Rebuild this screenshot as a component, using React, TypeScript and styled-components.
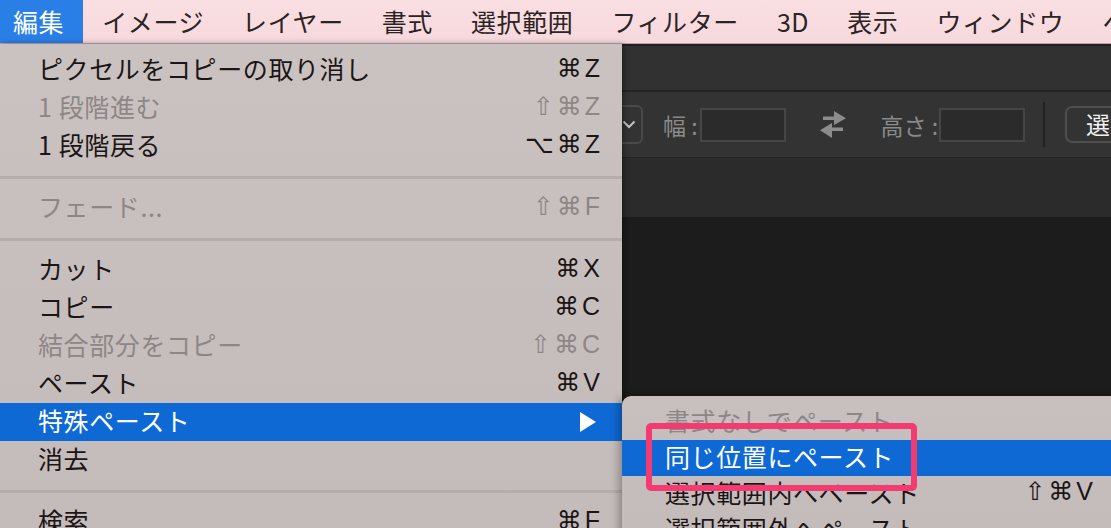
import React from 'react';
import styled, { createGlobalStyle } from 'styled-components';

type Entry =
  | { kind: 'item'; label: string; shortcut?: string; disabled?: boolean; active?: boolean; submenu?: boolean }
  | { kind: 'sep' };

const editMenu: Entry[] = [
  { kind: 'item', label: 'ピクセルをコピーの取り消し', shortcut: '⌘Z' },
  { kind: 'item', label: '1 段階進む', shortcut: '⇧⌘Z', disabled: true },
  { kind: 'item', label: '1 段階戻る', shortcut: '⌥⌘Z' },
  { kind: 'sep' },
  { kind: 'item', label: 'フェード...', shortcut: '⇧⌘F', disabled: true },
  { kind: 'sep' },
  { kind: 'item', label: 'カット', shortcut: '⌘X' },
  { kind: 'item', label: 'コピー', shortcut: '⌘C' },
  { kind: 'item', label: '結合部分をコピー', shortcut: '⇧⌘C', disabled: true },
  { kind: 'item', label: 'ペースト', shortcut: '⌘V' },
  { kind: 'item', label: '特殊ペースト', active: true, submenu: true },
  { kind: 'item', label: '消去' },
  { kind: 'sep' },
  { kind: 'item', label: '検索', shortcut: '⌘F' },
];

const pasteMenu = [
  { label: '書式なしでペースト', disabled: true },
  { label: '同じ位置にペースト', active: true },
  { label: '選択範囲内へペースト', shortcut: '⇧⌘V' },
  { label: '選択範囲外へペースト' },
];

const menuTitles = ['編集', 'イメージ', 'レイヤー', '書式', '選択範囲', 'フィルター', '3D', '表示', 'ウィンドウ', 'ヘルプ'];

export default function App() {
  return (
    <>
      <GlobalStyle />
      <Screen>
        <MenuBar>
          {menuTitles.map((t, i) => (
            <MenuTitle key={t} $active={i === 0}>
              {t}
            </MenuTitle>
          ))}
        </MenuBar>

        <Workspace>
          <TabStrip />
          <OptionsBar>
            <Dropdown>
              <svg width="14" height="9" viewBox="0 0 14 9">
                <path d="M1.5 1.5 L7 7 L12.5 1.5" fill="none" stroke="#c4c4c4" strokeWidth="2" />
              </svg>
            </Dropdown>
            <FieldLabel $ml={20}>幅 :</FieldLabel>
            <FieldBox $ml={2} />
            <SwapIcon width="28" height="27" viewBox="0 0 28 27">
              <rect x="4" y="5.5" width="13" height="3.5" fill="#8c8c8c" />
              <polygon points="15,0 27,7.2 15,14" fill="#8c8c8c" />
              <rect x="11" y="16.5" width="13" height="3.5" fill="#8c8c8c" />
              <polygon points="13,12 1,19.2 13,27" fill="#8c8c8c" />
            </SwapIcon>
            <FieldLabel $ml={34}>高さ :</FieldLabel>
            <FieldBox $ml={1} />
            <Divider />
            <ToolButton>選択とマスク...</ToolButton>
          </OptionsBar>
          <DocBar />
          <Canvas />
        </Workspace>

        <EditMenu>
          {editMenu.map((e, i) =>
            e.kind === 'sep' ? (
              <Separator key={i} />
            ) : (
              <Row key={i} $disabled={e.disabled} $active={e.active}>
                <span>{e.label}</span>
                {e.shortcut && <Shortcut>{e.shortcut}</Shortcut>}
                {e.submenu && (
                  <svg width="18" height="22" viewBox="0 0 18 22">
                    <polygon points="1,1 17,11 1,21" fill="#fff" />
                  </svg>
                )}
              </Row>
            )
          )}
        </EditMenu>

        <SubMenu>
          {pasteMenu.map((e) => (
            <SubRow key={e.label} $disabled={e.disabled} $active={e.active}>
              <span>{e.label}</span>
              {e.shortcut && <Shortcut>{e.shortcut}</Shortcut>}
            </SubRow>
          ))}
        </SubMenu>

        <Callout />
      </Screen>
    </>
  );
}

const GlobalStyle = createGlobalStyle`
  html, body {
    margin: 0;
    padding: 0;
    background: #1c1c1c;
    overflow: hidden;
  }
  body {
    font-family: 'Noto Sans CJK JP', 'Noto Sans', sans-serif;
  }
`;

const Screen = styled.div`
  position: relative;
  width: 1111px;
  height: 528px;
  overflow: hidden;
  display: flex;
  flex-direction: column;
  background: #1c1c1c;
`;

const MenuBar = styled.div`
  height: 43px;
  flex-shrink: 0;
  display: flex;
  align-items: stretch;
  background: linear-gradient(#fadfe2, #f6d9dc);
  border-bottom: 1px solid #b9a6a9;
  white-space: nowrap;
`;

const MenuTitle = styled.div<{ $active?: boolean }>`
  display: flex;
  align-items: center;
  padding: 0 19px 2px;
  font-size: 25px;
  letter-spacing: 0.6px;
  color: ${({ $active }) => ($active ? '#ffffff' : '#2b2324')};
  background: ${({ $active }) => ($active ? '#2a7fe7' : 'transparent')};

  &:first-child {
    padding-left: 13px;
  }
`;

const Workspace = styled.div`
  flex: 1;
  display: flex;
  flex-direction: column;
  border-top: 2px solid #1f1f1f;
`;

const TabStrip = styled.div`
  height: 44px;
  flex-shrink: 0;
  background: #313131;
  border-bottom: 2px solid #232323;
`;

const OptionsBar = styled.div`
  height: 65px;
  flex-shrink: 0;
  display: flex;
  align-items: center;
  padding-left: 563px;
  background: #333333;
  border-bottom: 1px solid #242424;
  white-space: nowrap;
  overflow: hidden;

  & > * {
    flex-shrink: 0;
  }
`;

const Dropdown = styled.div`
  width: 80px;
  height: 39px;
  box-sizing: border-box;
  display: flex;
  align-items: center;
  justify-content: flex-end;
  padding-right: 5px;
  border: 2px solid #4a4a4a;
  border-radius: 6px;
`;

const FieldLabel = styled.span<{ $ml: number }>`
  margin-left: ${({ $ml }) => $ml}px;
  font-size: 23px;
  color: #8a8a8a;
`;

const FieldBox = styled.div<{ $ml: number }>`
  margin-left: ${({ $ml }) => $ml}px;
  width: 86px;
  height: 34px;
  box-sizing: border-box;
  border: 2px solid #464646;
  background: #2b2b2b;
`;

const SwapIcon = styled.svg`
  margin-left: 33px;
`;

const Divider = styled.div`
  margin-left: 18px;
  width: 2px;
  height: 45px;
  background: #222222;
`;

const ToolButton = styled.div`
  margin-left: 20px;
  height: 37px;
  box-sizing: border-box;
  display: flex;
  align-items: center;
  padding: 0 19px 2px;
  border: 2px solid #4e4e4e;
  border-radius: 7px;
  font-size: 24px;
  color: #f0f0f0;
`;

const DocBar = styled.div`
  height: 59px;
  flex-shrink: 0;
  background: #2b2b2b;
`;

const Canvas = styled.div`
  flex: 1;
  background: #1c1c1c;
`;

const EditMenu = styled.div`
  position: absolute;
  top: 44px;
  left: 0;
  width: 622px;
  bottom: -40px;
  padding-top: 7px;
  box-sizing: border-box;
  background: linear-gradient(#cac2c1, #c3bbba);
  box-shadow: 2px 0 6px rgba(0, 0, 0, 0.35);
`;

const Row = styled.div<{ $disabled?: boolean; $active?: boolean }>`
  height: 38px;
  box-sizing: border-box;
  display: flex;
  align-items: center;
  justify-content: space-between;
  padding: 0 22px 4px 38px;
  font-size: 25px;
  letter-spacing: 0.6px;
  white-space: nowrap;
  color: ${({ $disabled, $active }) => ($active ? '#ffffff' : $disabled ? '#8e8686' : '#1b1515')};
  background: ${({ $active }) => ($active ? '#0f69d5' : 'transparent')};

  svg {
    margin: 4px 3px 0 0;
  }
`;

const Separator = styled.div`
  height: 24px;
  display: flex;
  align-items: center;

  &::before {
    content: '';
    width: 100%;
    height: 3px;
    background: #b5adac;
  }
`;

const Shortcut = styled.span`
  font-family: 'Liberation Sans', 'DejaVu Sans', sans-serif;
  font-size: 25px;
  letter-spacing: 3px;
  margin-right: -3px;
`;

const SubMenu = styled.div`
  position: absolute;
  top: 396px;
  left: 622px;
  right: -20px;
  height: 180px;
  padding-top: 8px;
  box-sizing: border-box;
  background: linear-gradient(#c7c0bf, #c2bab9);
  border-radius: 9px 0 0 0;
  box-shadow: -3px 0 8px rgba(0, 0, 0, 0.3);
`;

const SubRow = styled(Row)`
  height: 36px;
  padding: 0 38px 5px 43px;
`;

const Callout = styled.div`
  position: absolute;
  left: 646px;
  top: 423px;
  width: 271px;
  height: 68px;
  box-sizing: border-box;
  border: 6px solid #f43b71;
  border-radius: 5px;
`;
